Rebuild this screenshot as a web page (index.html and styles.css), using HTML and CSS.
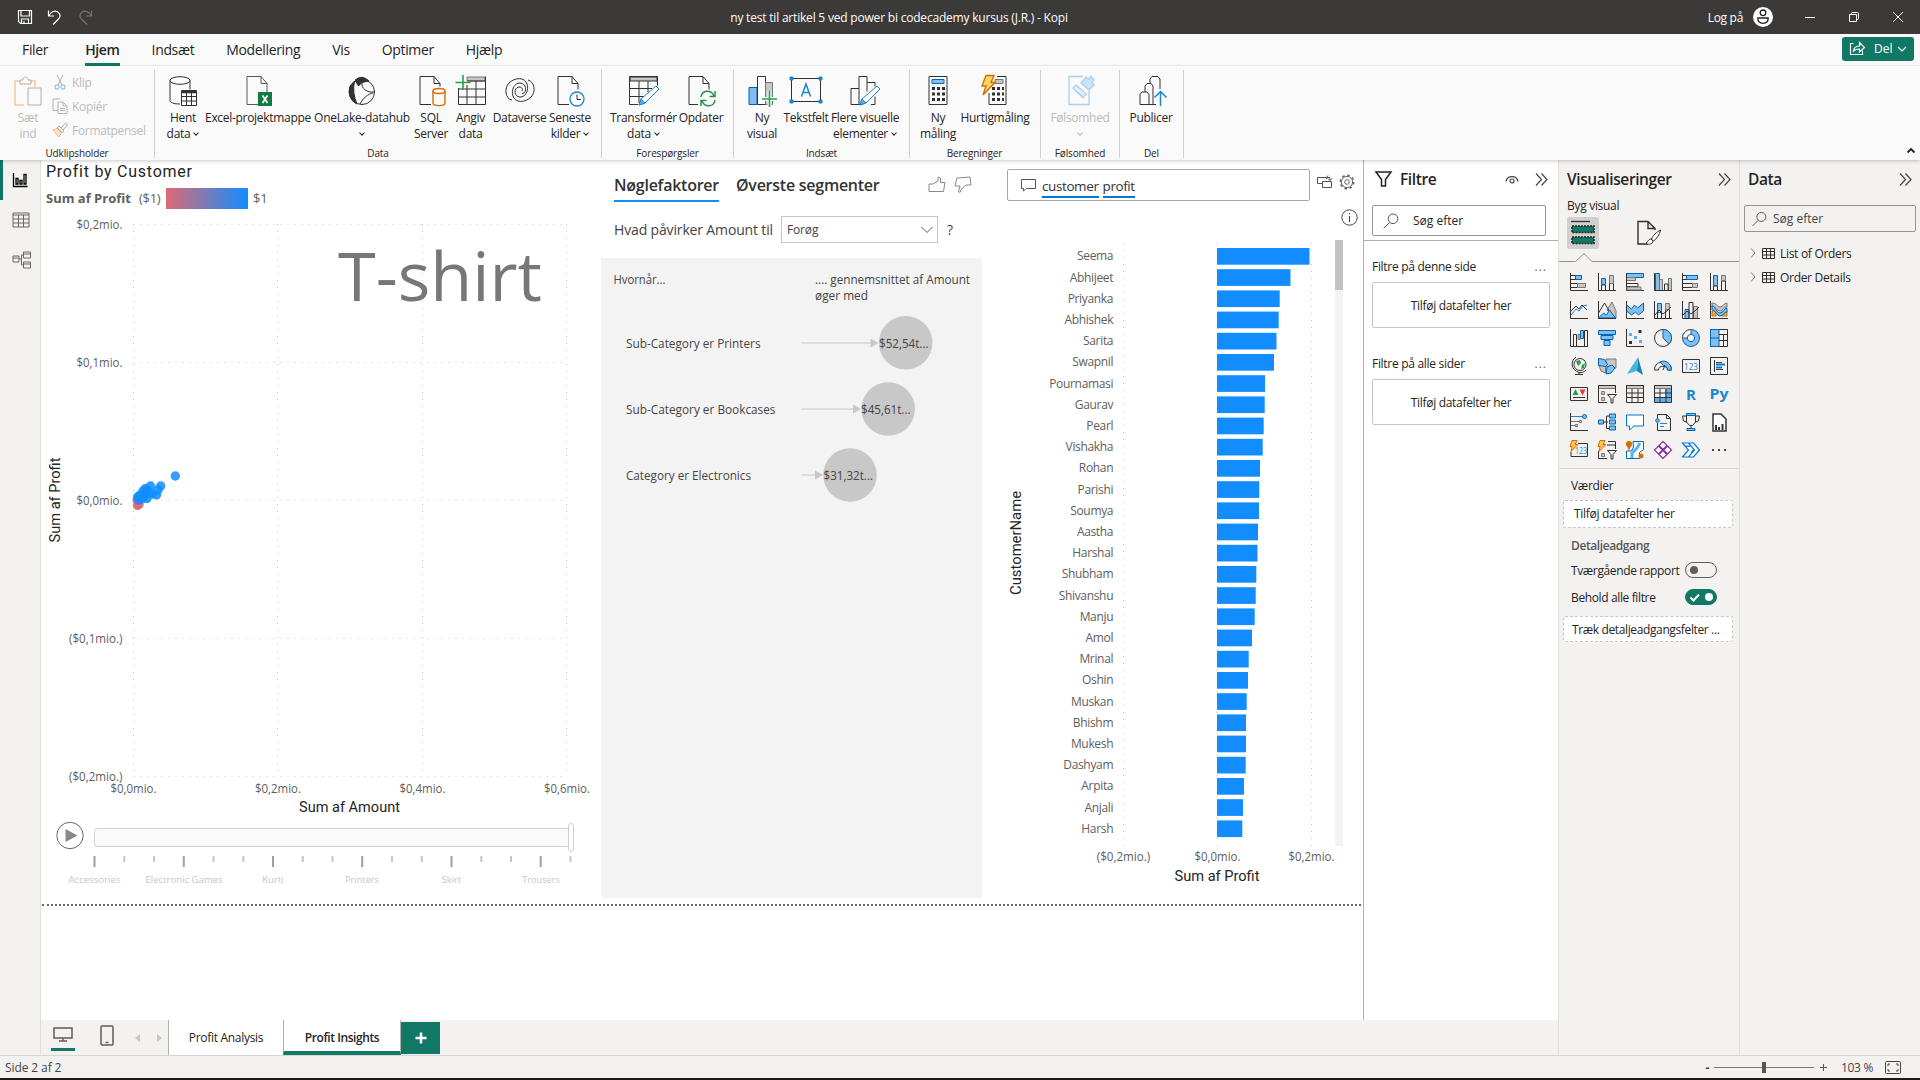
FILE: index.html
```html
<!DOCTYPE html>
<html lang="da">
<head>
<meta charset="utf-8">
<title>Power BI Desktop</title>
<link rel="stylesheet" href="styles.css">
</head>
<body>
<div class="app">
<header class="titlebar">
  <div class="quick">
    <svg width="16" height="16" viewBox="0 0 16 16" class="ln"><path d="M1.5 1.5h13v13h-11l-2-2zM4 1.5v5.500h8.500v-5.500M4.500 14.500v-4.500h7v4.500M7 12v2.500"/></svg>
    <svg width="16" height="17" viewBox="0 0 16 17" class="ln"><path d="M1.500 1.500v5.500h5.500M1.800 6.700C4 2.500 8 1 11 3.200c3.200 2.400 2.300 5.200 0 7.300L6 15.500"/></svg>
    <svg width="16" height="17" viewBox="0 0 16 17" class="ln dim"><path d="M14.500 1.500v5.500h-5.500M14.200 6.700C12 2.500 8 1 5 3.200c-3.200 2.400-2.300 5.200 0 7.300L10 15.500"/></svg>
  </div>
  <div class="doc-title">ny test til artikel 5 ved power bi codecademy kursus (J.R.) - Kopi</div>
  <div class="account">
    <span>Log på</span>
    <svg class="avatar" width="20" height="20" viewBox="0 0 20 20"><circle cx="10" cy="10" r="10" fill="#fff"/><g fill="none" stroke="#222" stroke-width="1.300"><circle cx="10" cy="5.800" r="2.800"/><path d="M4.800 11h10.400c0 3.500-2 5.300-5.200 5.300s-5.200-1.800-5.200-5.300z"/></g></svg>
    <svg class="win" width="12" height="12" viewBox="0 0 12 12"><path d="M1 6.500h10"/></svg>
    <svg class="win" width="12" height="12" viewBox="0 0 12 12"><path d="M1.500 3.500h7v7h-7zM3.500 3.500v-1q0-1 1-1h5q1 0 1 1v5q0 1-1 1h-1"/></svg>
    <svg class="win" width="12" height="12" viewBox="0 0 12 12"><path d="M1 1l10 10M11 1l-10 10"/></svg>
  </div>
</header>

<nav class="menubar">
  <a>Filer</a><a class="active">Hjem</a><a>Indsæt</a><a>Modellering</a><a>Vis</a><a>Optimer</a><a>Hjælp</a>
  <button class="share"><svg width="17" height="17" viewBox="0 0 17 17" class="ln"><path d="M4.500 3.500h-3v11h12v-4M4.500 11c.5-3.500 2.500-5 6-5v-3.500l5 5-5 4.500v-3c-2.500 0-4.500.5-6 2z"/></svg><span>Del</span><svg width="10" height="6" viewBox="0 0 10 6" class="ln"><path d="M1 1l4 4 4-4"/></svg></button>
</nav>

<section class="ribbon">
  <div class="group g-clip">
    <div class="items">
      <div class="cmd off c-paste"><svg width="30" height="32" viewBox="0 0 30 32"><path d="M11 30H2V6h5M17 6h5v6" fill="none" stroke="#f3c99b" stroke-width="1.500"/><path d="M7 9V5h3c0-4 5-4 5 0h3v4z" class="q"/><path d="M15 13h13v17H15z" class="q"/></svg><span>Sæt<br>ind</span></div>
      <div class="stack">
        <div><svg width="16" height="16" viewBox="0 0 16 16"><path d="M5 1l5 10M11 1L6 11" class="q"/><g fill="none" stroke="#9fc9ea" stroke-width="1.300"><circle cx="5" cy="13" r="2"/><circle cx="11" cy="13" r="2"/></g></svg>Klip</div>
        <div><svg width="16" height="16" viewBox="0 0 16 16" class="q"><path d="M6 12.500H1V1h7M6 4h5l4 4v7.500H6zM11 4v4h4M8 10.500h5M8 12.500h5"/></svg>Kopiér</div>
        <div><svg width="16" height="16" viewBox="0 0 16 16"><path d="M1 8l5-2 4 4-3 5z" fill="#fbe3c9" stroke="#f0bd88"/><path d="M5 6l5 5 2-2-5-5zM9 6l4.500-5 2 1.500L11 8" class="q"/></svg>Formatpensel</div>
      </div>
    </div>
    <div class="gname">Udklipsholder</div>
  </div>
  <div class="group g-data">
    <div class="items">
      <div class="cmd w36"><svg width="30" height="32" viewBox="0 0 30 32" class="k"><ellipse cx="12" cy="5.500" rx="10" ry="3.800"/><path d="M2 5.500v20c0 2 4 3.500 10 3.500M22 5.500v9"/><path d="M13.500 15.500h15v15h-15z" fill="#fff"/><path d="M14 17h14" stroke-width="2.500"/><path d="M13.500 21.500h15M13.500 26h15M18.500 18v12M23.500 18v12"/></svg><span>Hent<br>data<i class="cv"></i></span></div>
      <div class="cmd w114"><svg width="30" height="32" viewBox="0 0 30 32"><path d="M15 29.500H4v-28h14l6 7v9M18 1.500v7h6" fill="none" stroke="#5d5b59"/><path d="M15 17h14v14H15z" fill="#107c41"/><path d="M19.500 20.500l5 7.500M24.500 20.500l-5 7.500" stroke="#fff" stroke-width="1.800"/></svg><span>Excel-projektmappe</span></div>
      <div class="cmd w94"><svg width="30" height="32" viewBox="0 0 30 32" class="k"><circle cx="15" cy="17" r="12.500"/><path d="M8 5q7-6 14 1l-7 1.500-3.500 3.500zM3 11l-1 6q1 9 8 12Q5 18 7.500 6z" fill="#323130"/><path d="M15 8c-1 5 5 10 12 9M26 18c-5 1-10 5-13 11"/></svg><span>OneLake-datahub<br><i class="cv solo"></i></span></div>
      <div class="cmd w44"><svg width="30" height="32" viewBox="0 0 30 32" class="k"><path d="M15 29.500H4v-28h14l6 7v3M18 1.500v7h6"/><g stroke="#d86c00" stroke-width="1.400"><ellipse cx="23" cy="16" rx="6" ry="2.500"/><path d="M17 16v12c0 3.500 12 3.500 12 0V16"/></g></svg><span>SQL<br>Server</span></div>
      <div class="cmd w35"><svg width="32" height="32" viewBox="0 0 32 32"><path d="M12 2h18v4H12z" fill="#c8c6c4" stroke="#777"/><g class="k"><path d="M3.500 13v16.500h27v-28M12.500 6h18M3.500 14h27M3.500 22h27M12 10v19M21 6v23"/></g><path d="M8 0v15M.5 7.500h15" stroke="#21a34a" stroke-width="1.600"/></svg><span>Angiv<br>data</span></div>
      <div class="cmd w63"><svg width="30" height="32" viewBox="0 0 30 32" class="k"><path d="M7 25C0 24-1 13 4 8c6-6 16-6 18 1 2 6-1 13-7 13-6 0-7-9-1-10 3 0 4 2 3 4"/><path d="M23 5c7 2 8 12 3 17-6 6-16 6-18-1-2-6 1-13 7-13 6 0 8 9 2 11"/></svg><span>Dataverse</span></div>
      <div class="cmd w38"><svg width="30" height="32" viewBox="0 0 30 32" class="k"><path d="M14 29.500H3v-28h14l6 7v6M17 1.500v7h6"/><circle cx="22" cy="24" r="7" fill="#fff" stroke="#1b86d1" stroke-width="1.300"/><path d="M22 19.500v5h4"/></svg><span>Seneste<br>kilder<i class="cv"></i></span></div>
    </div>
    <div class="gname">Data</div>
  </div>
  <div class="group g-query">
    <div class="items">
      <div class="cmd w63"><svg width="32" height="32" viewBox="0 0 32 32" class="k"><path d="M2 2h27v4H2z" fill="#c8c6c4"/><path d="M10 29.500H1.500v-28h28v9M2 13.500h22M2 21.500h14M11 6v22M20 6v11"/><path d="M11 30l2-6 15-13 3 3-14 14z" fill="#fff" stroke="#1b86d1"/><path d="M11 30l2-6 4 4z" fill="#5fb0ee" stroke="#1b86d1"/></svg><span>Transformér<br>data<i class="cv"></i></span></div>
      <div class="cmd w52"><svg width="30" height="32" viewBox="0 0 30 32" class="k"><path d="M12 29.500H3v-28h14l6 7v6M17 1.500v7h6"/><g stroke="#2b9348" stroke-width="1.500"><path d="M15 22c1-7 10-8 13-1M29 16v5.500h-5.500M29 25c-1 7-10 8-13 1M15 31v-5.500h5.500"/></g></svg><span>Opdater</span></div>
    </div>
    <div class="gname">Forespørgsler</div>
  </div>
  <div class="group g-insert">
    <div class="items">
      <div class="cmd w36"><svg width="30" height="32" viewBox="0 0 30 32" class="k"><path d="M2 12.500h8v17H2z" fill="#83beec" stroke="#0066b4"/><path d="M10.500 1.500h8v28h-8z" fill="#fff"/><path d="M18.500 7.500h7v22h-7z" fill="#c8c6c4" stroke="#777"/><path d="M22.500 16v16M15 24h15" stroke="#fafafa" stroke-width="4"/><path d="M22.500 16v16M15 24h15" stroke="#21a34a" stroke-width="1.600"/></svg><span>Ny<br>visual</span></div>
      <div class="cmd w52"><svg width="34" height="32" viewBox="0 0 34 32" class="k"><path d="M2.500 3.500h29v23h-29z"/><path d="M12.500 21.500l4.500-12.500 4.500 12.500M14 17.500h6" stroke="#1b86d1" stroke-width="1.500"/><path d="M1 2h3v3H1zM30 2h3v3h-3zM1 25h3v3H1zM30 25h3v3h-3z" fill="#1b86d1" stroke="#1b86d1"/></svg><span>Tekstfelt</span></div>
      <div class="cmd w66"><svg width="32" height="32" viewBox="0 0 32 32" class="k"><path d="M11 29.500H2v-16h8M10 29V1.500h8v15M18 7.500h8v4M22 29.500h4v-8"/><path d="M11 30l2-6 15-13 3 3-14 14z" fill="#fff" stroke="#1b86d1"/><path d="M11 30l2-6 4 4z" fill="#5fb0ee" stroke="#1b86d1"/></svg><span>Flere visuelle<br>elementer<i class="cv"></i></span></div>
    </div>
    <div class="gname">Indsæt</div>
  </div>
  <div class="group g-calc">
    <div class="items">
      <div class="cmd w38"><svg width="20" height="32" viewBox="0 0 20 32" class="k"><path d="M1 1.500h18v28H1z"/><path d="M4 4.500h12v4H4z" fill="#83beec" stroke="#0066b4"/><path d="M4 13.500h13M4 19h13M4 24.500h13" stroke-width="3" stroke-dasharray="3 2"/></svg><span>Ny<br>måling</span></div>
      <div class="cmd w76"><svg width="28" height="32" viewBox="0 0 28 32" class="k"><path d="M8 18v11.500h17v-28h-9"/><path d="M14 4.500h8v4h-8z" fill="#c8c6c4" stroke="#777"/><path d="M11 13.500h12M11 19h12M11 24.500h12" stroke-width="3" stroke-dasharray="3 2"/><path d="M5 .5h8l-3 7h4L2 20l3-9H1z" fill="#ffd667" stroke="#d86c00" stroke-width="1.400"/></svg><span>Hurtigmåling</span></div>
    </div>
    <div class="gname">Beregninger</div>
  </div>
  <div class="group g-sens">
    <div class="items">
      <div class="cmd off w58"><svg width="30" height="32" viewBox="0 0 30 32" fill="none" stroke="#a9d0ee" stroke-width="1.300"><path d="M18 1.500H4v28h20V16"/><path d="M8 13l3-3 10 9-3 4zM10 15l7 6" fill="#e3f1fb"/><path d="M16 8l5-6 3 2 2-3 3 4-2 2 2 3-5 5z" fill="#c9e4f7"/></svg><span>Følsomhed<br><i class="cv solo"></i></span></div>
    </div>
    <div class="gname">Følsomhed</div>
  </div>
  <div class="group g-pub">
    <div class="items">
      <div class="cmd w42"><svg width="30" height="32" viewBox="0 0 30 32" class="k"><path d="M4 29.500v-10l2-2.500h5l2 2.500v10zM9 17v-6l2-2.500h4l2 2.500v11M13 29.500h7M14 8.500V4l2-2.500h6l2 2.500v10M17 22v7"/><path d="M24.500 31V17M18.500 22.500l6-6 6 6" stroke="#1b86d1" stroke-width="1.500"/></svg><span>Publicer</span></div>
    </div>
    <div class="gname">Del</div>
  </div>
  <svg class="collapse" width="10" height="7" viewBox="0 0 10 7"><path d="M1.500 5.500L5 2l3.500 3.500" fill="none" stroke="#222" stroke-width="1.800"/></svg>
</section>

<main class="work">
  <aside class="rail">
    <div class="rail-item on"><svg width="16" height="16" viewBox="0 0 16 16" class="k dark"><path d="M1.500 1v13.500h14M4 6.500h2v5.500H4zM8 8.500h2v3.500H8zM12 2.500h2v9.500h-2z"/></svg></div>
    <div class="rail-item"><svg width="18" height="16" viewBox="0 0 18 16" fill="none" stroke="#6b6967"><path d="M1 1h16v14H1zM1 3h16M1 7h16M1 11h16M6.500 3v12M11.500 3v12"/></svg></div>
    <div class="rail-item"><svg width="20" height="18" viewBox="0 0 20 18" fill="none" stroke="#6b6967"><path d="M1 5h6v6H1zM1 7h6M11.500 1h7v6h-7zM11.500 3h7M11.500 11h7v6h-7zM11.500 13h7M7 8h2.500M9.500 4v10M9.500 4h2M9.500 14h2"/></svg></div>
  </aside>

  <div class="center">
  <div class="canvas-row">
    <div class="canvas">
      <div class="visuals">
      <section class="scatter">
        <h2>Profit by Customer</h2>
        <div class="legend"><b>Sum af Profit</b><span class="lo">($1)</span><i class="ramp"></i><span>$1</span></div>
        <svg class="plot" width="560" height="680" viewBox="41 210 560 680">
          <g class="grid"><path d="M133.500 224V777M277.500 224V777M422.500 224V777M566.500 224V777M133.500 224.500H567M133.500 362.500H567M133.500 500.500H567M133.500 638.500H567M133.500 776.500H567"/></g>
          <text x="338" y="301" class="watermark" textLength="204" lengthAdjust="spacingAndGlyphs">T-shirt</text>
          <g class="ax" text-anchor="end">
            <text x="122.500" y="229" textLength="46" lengthAdjust="spacingAndGlyphs">$0,2mio.</text>
            <text x="122.500" y="367" textLength="46" lengthAdjust="spacingAndGlyphs">$0,1mio.</text>
            <text x="122.500" y="505" textLength="46" lengthAdjust="spacingAndGlyphs">$0,0mio.</text>
            <text x="122.500" y="643" textLength="53.500" lengthAdjust="spacingAndGlyphs">($0,1mio.)</text>
            <text x="122.500" y="781" textLength="53.500" lengthAdjust="spacingAndGlyphs">($0,2mio.)</text>
          </g>
          <g class="ax" text-anchor="middle">
            <text x="133.500" y="793" textLength="46" lengthAdjust="spacingAndGlyphs">$0,0mio.</text>
            <text x="278" y="793" textLength="46" lengthAdjust="spacingAndGlyphs">$0,2mio.</text>
            <text x="422.500" y="793" textLength="46" lengthAdjust="spacingAndGlyphs">$0,4mio.</text>
            <text x="567" y="793" textLength="46" lengthAdjust="spacingAndGlyphs">$0,6mio.</text>
          </g>
          <text x="349.500" y="812" class="axt" text-anchor="middle" textLength="101" lengthAdjust="spacingAndGlyphs">Sum af Amount</text>
          <text class="axt" text-anchor="middle" transform="translate(60 500) rotate(-90)" textLength="85" lengthAdjust="spacingAndGlyphs">Sum af Profit</text>
          <g fill="#e0646c" fill-opacity=".85"><circle cx="137.400" cy="505.500" r="4.700"/><circle cx="139" cy="504.500" r="4.700"/><circle cx="137" cy="500" r="4.700"/></g>
          <g fill="#118dff" fill-opacity=".85"><circle cx="175.300" cy="476" r="4.700"/><circle cx="160.700" cy="486" r="4.700"/><circle cx="158" cy="490" r="4.700"/><circle cx="156.500" cy="495" r="4.700"/><circle cx="150.500" cy="486" r="4.700"/><circle cx="145.500" cy="488.500" r="4.700"/><circle cx="147" cy="490" r="4.700"/><circle cx="143" cy="491" r="4.700"/><circle cx="149" cy="493" r="4.700"/><circle cx="147" cy="498.500" r="4.700"/><circle cx="152" cy="494" r="4.700"/><circle cx="144" cy="496" r="4.700"/><circle cx="140" cy="495" r="4.700"/><circle cx="137.500" cy="497" r="4.700"/><circle cx="138.500" cy="500" r="4.700"/><circle cx="142" cy="499" r="4.700"/></g>
          <circle cx="70" cy="835.500" r="13.200" fill="#fff" stroke="#666"/><path d="M65.500 829v13l12-6.500z" fill="#8a8886"/>
          <rect x="94.500" y="828.500" width="476" height="18" rx="3" fill="#fafafa" stroke="#d2d0ce"/>
          <rect x="568.500" y="823.500" width="5" height="28" rx="2.500" fill="#fff" stroke="#d2d0ce"/>
          <path d="M94.500 856v11M183.800 856v11M273 856v11M362.200 856v11M451.500 856v11M540.700 856v11" stroke="#a19f9d" stroke-width="2"/>
          <path d="M124.300 856v6M154 856v6M213.500 856v6M243.300 856v6M302.800 856v6M332.500 856v6M392 856v6M421.800 856v6M481.300 856v6M511 856v6M570.500 856v6" stroke="#c8c6c4" stroke-width="2"/>
          <g class="ticks" text-anchor="middle">
            <text x="94.500" y="883" textLength="52" lengthAdjust="spacingAndGlyphs">Accessories</text><text x="184" y="883" textLength="77" lengthAdjust="spacingAndGlyphs">Electronic Games</text><text x="273" y="883" textLength="21.500" lengthAdjust="spacingAndGlyphs">Kurti</text><text x="362" y="883" textLength="34" lengthAdjust="spacingAndGlyphs">Printers</text><text x="451.500" y="883" textLength="20" lengthAdjust="spacingAndGlyphs">Skirt</text><text x="541" y="883" textLength="37.500" lengthAdjust="spacingAndGlyphs">Trousers</text>
          </g>
        </svg>
      </section>

      <section class="influencers">
        <div class="ki-tabs"><span class="sel">Nøglefaktorer</span><span class="other">Øverste segmenter</span>
          <svg width="18" height="17" viewBox="0 0 18 17" class="thumb"><path d="M1 8h4l5-3V1l2.500 1v4.500H17l-1.500 9H1z"/></svg>
          <svg width="18" height="17" viewBox="0 0 18 17" class="thumb down"><path d="M3 2l13-1 1 8h-5l-5 4.500-1 3-1.500-1L6 10H1z"/></svg>
        </div>
        <div class="ki-q"><span>Hvad påvirker Amount til</span><div class="select">Forøg<svg width="12" height="8" viewBox="0 0 12 8"><path d="M.5 1L6 6.500 11.500 1" fill="none" stroke="#555"/></svg></div><span class="help">?</span></div>
        <svg class="ki-body" width="381" height="640" viewBox="601 258 381 640">
          <rect x="601" y="258" width="381" height="640" fill="#f3f3f3"/>
          <g class="kt">
          <text x="613.500" y="284" textLength="52" lengthAdjust="spacingAndGlyphs">Hvornår...</text>
          <text x="815" y="284" textLength="155" lengthAdjust="spacingAndGlyphs">.... gennemsnittet af Amount</text>
          <text x="815" y="300" textLength="53" lengthAdjust="spacingAndGlyphs">øger med</text>
          <text x="626" y="348" textLength="134.500" lengthAdjust="spacingAndGlyphs">Sub-Category er Printers</text>
          <text x="626" y="414" textLength="149.500" lengthAdjust="spacingAndGlyphs">Sub-Category er Bookcases</text>
          <text x="626" y="480" textLength="125" lengthAdjust="spacingAndGlyphs">Category er Electronics</text>
          </g>
          <path d="M801.500 343h72M801.500 409h54M801.500 475h16" stroke="#c8c8c8"/>
          <path d="M870.500 338.500l8 4.500-8 4.500zM853 404.500l8 4.500-8 4.500zM815 470.500l8 4.500-8 4.500z" fill="#c8c8c8"/>
          <g fill="#c8c8c8"><circle cx="905.700" cy="342.800" r="26.800"/><circle cx="888.200" cy="409" r="26.800"/><circle cx="850" cy="475" r="26.800"/></g>
          <g class="kt"><text x="879" y="348" textLength="49.500" lengthAdjust="spacingAndGlyphs">$52,54t...</text><text x="861" y="414" textLength="49.500" lengthAdjust="spacingAndGlyphs">$45,61t...</text><text x="823.500" y="480" textLength="49.500" lengthAdjust="spacingAndGlyphs">$31,32t...</text></g>
        </svg>
      </section>

      <section class="qna">
        <div class="qna-top">
          <div class="ask"><svg width="15" height="13" viewBox="0 0 15 13" fill="none" stroke="#555"><path d="M.5.5h14v9H5.500L2.500 12V9.500h-2z"/></svg><u>customer</u><u>profit</u></div>
          <svg class="conv" width="15" height="14" viewBox="0 0 15 14" fill="none" stroke="#555"><path d="M5 8.500H.5v-6h9M5.500 6.500h9v6h-9zM9.500 2.500v1.500M9.500 2.500h3.500v3M11 3.500l2 2 2-2M11 .5l-1.500 2"/></svg>
          <svg width="16" height="16" viewBox="0 0 16 16" fill="none" stroke="#666"><circle cx="8" cy="8" r="2.300"/><circle cx="8" cy="8" r="5.600"/><circle cx="8" cy="8" r="6.700" stroke-dasharray="2.600 2.660" stroke-width="1.600"/></svg>
        </div>
        <svg class="info" width="17" height="17" viewBox="0 0 17 17" fill="none" stroke="#444"><circle cx="8.500" cy="8.500" r="7.700"/><path d="M8.500 7v6M8.500 4v1.300"/></svg>
        <svg class="bars" width="356" height="660" viewBox="1007 230 356 660">
          <g class="grid"><path d="M1123.500 243V846M1217.500 243V846M1311.500 243V846"/></g>
          <rect x="1335" y="240" width="8" height="606" fill="#f3f3f3"/><rect x="1335" y="240" width="8" height="50" fill="#c1c1c1"/>
          <g id="bars" fill="#118dff"></g>
          <g id="names" class="ax names" text-anchor="end"></g>
          <g class="ax" text-anchor="middle"><text x="1123.500" y="861" textLength="53.500" lengthAdjust="spacingAndGlyphs">($0,2mio.)</text><text x="1217.500" y="861" textLength="46" lengthAdjust="spacingAndGlyphs">$0,0mio.</text><text x="1311.500" y="861" textLength="46" lengthAdjust="spacingAndGlyphs">$0,2mio.</text></g>
          <text x="1217" y="881" class="axt" text-anchor="middle" textLength="85" lengthAdjust="spacingAndGlyphs">Sum af Profit</text>
          <text class="axt" text-anchor="middle" transform="translate(1021 543) rotate(-90)" textLength="104" lengthAdjust="spacingAndGlyphs">CustomerName</text>
        </svg>
      </section>
      </div>
      <div class="page-edge"></div>
    </div>

    <aside class="filters">
      <div class="pane-head"><svg width="17" height="17" viewBox="0 0 17 17" fill="none" stroke="#252423" stroke-width="1.500"><path d="M1 1h15l-5.500 7.500V15h-4V8.500z"/></svg><h3>Filtre</h3>
        <svg class="eye" width="14" height="9" viewBox="0 0 14 9" fill="none" stroke="#444" stroke-width="1.200"><path d="M1 6.500C2.500 0 11.500 0 13 6.500"/><circle cx="7" cy="6" r="2"/></svg>
        <svg class="dbl" width="13" height="13" viewBox="0 0 13 13"><path d="M1 .5l5.500 6-5.500 6M6.500.5l5.500 6-5.500 6"/></svg></div>
      <div class="search"><svg width="16" height="16" viewBox="0 0 16 16"><circle cx="10" cy="5.800" r="4.800"/><path d="M6.500 9.500L.7 15.300"/></svg><span>Søg efter</span></div>
      <hr>
      <div class="flabel"><span>Filtre på denne side</span><i>...</i></div>
      <div class="fdrop">Tilføj datafelter her</div>
      <div class="flabel second"><span>Filtre på alle sider</span><i>...</i></div>
      <div class="fdrop">Tilføj datafelter her</div>
    </aside>
  </div>

  <footer class="pages">
    <div class="device on"><svg width="20" height="15" viewBox="0 0 20 15" fill="none" stroke="#605e5c" stroke-width="1.500"><path d="M1 1h18v10H1zM10 11v3M6 14h8"/></svg></div>
    <div class="device"><svg width="14" height="21" viewBox="0 0 14 21" fill="none" stroke="#605e5c" stroke-width="1.500"><rect x="1" y="1" width="12" height="19" rx="1"/><path d="M5.500 17.500h3"/></svg></div>
    <svg class="arrows" width="28" height="8" viewBox="0 0 28 8" fill="#c8c6c4"><path d="M5 0v8L0 4zM22 0v8l5-4z"/></svg>
    <div class="ptab">Profit Analysis</div>
    <div class="ptab cur">Profit Insights</div>
    <div class="padd"><svg width="12" height="12" viewBox="0 0 12 12"><path d="M6 .5v11M.5 6h11" stroke="#fff" stroke-width="2.500"/></svg></div>
  </footer>
  </div>

  <aside class="viz">
    <div class="pane-head"><h3>Visualiseringer</h3><svg class="dbl" width="13" height="13" viewBox="0 0 13 13"><path d="M1 .5l5.500 6-5.500 6M6.500.5l5.500 6-5.500 6"/></svg></div>
    <div class="build">Byg visual</div>
    <div class="modes">
      <div class="mode on"><svg width="26" height="26" viewBox="0 0 26 26"><path d="M1 1.500h19" stroke="#333" stroke-width="1.300"/><path d="M2 6h22v6.500H2zM2 17h22v6.500H2z" fill="#117865" stroke="#222" stroke-width="1.500" stroke-dasharray="2 1"/></svg></div>
      <div class="mode"><svg width="26" height="26" viewBox="0 0 26 26" class="k"><path d="M12 24H2V1.500h10l7 7V10M12 1.500v7h7" stroke-width="1.400"/><path d="M24.500 10c-4 2-8 6-9 9l2 2c3-2 6-6 7-11z" fill="#fff"/><path d="M15 19c-2 0-3 2-5 4.500 3 1.500 7 .5 7-2.500z" fill="#fff"/></svg></div>
    </div>
    <svg class="notch" width="180" height="9" viewBox="0 0 180 9" fill="none" stroke="#979593"><path d="M0 8.500h16.500L25 .7l8 7.800h147"/></svg>
    <div class="icons">
      <svg viewBox="0 0 18 18"><path class="k" d="M.5 0v17.500H18M1 2.500h5M1 6.500h5"/><path class="b" d="M5.500 2.500h6v4h-6z"/><path class="k" d="M1 10.500h6M1 14.500h6"/><path class="g" d="M7.500 10.500h8v4h-8z"/></svg>
      <svg viewBox="0 0 18 18"><path class="k" d="M.5 0v17.500H18M3.500 17v-5h4v5M11.500 17V9.500h4V17"/><path class="b" d="M3.500 5.500h4v6h-4z"/><path class="g" d="M11.500 2.500h4v8h-4z"/></svg>
      <svg viewBox="0 0 18 18"><path class="b" d="M.5.5h17v4H.5z"/><path class="g" d="M.5 4.500h9v3h-9z"/><path class="k" d="M.5 0v17.500H18M1 10.500h11v3H1"/><path class="g" d="M1 14h14v3H1z"/></svg>
      <svg viewBox="0 0 18 18"><path class="b" d="M1.500.5h4v17h-4z"/><path class="g" d="M5.500 6.500h3v11h-3zM14.500 5.500h3v12h-3z"/><path class="k" d="M.5 0v17.500H18M10.500 17v-6h3.500v6"/></svg>
      <svg viewBox="0 0 18 18"><path class="k" d="M.5 0v17.500H18M1 2.500h4M1 6.500h4M1 10.500h9M1 14.500h9"/><path class="b" d="M4.500 2.500h11v4h-11z"/><path class="g" d="M10.500 10.500h5v4h-5z"/></svg>
      <svg viewBox="0 0 18 18"><path class="k" d="M.5 0v17.500H18M3.500 17v-4h4v4M11.500 17V8h4v9"/><path class="b" d="M3.500 2.500h4v10h-4z"/><path class="g" d="M11.500 2.500h4v5h-4z"/></svg>

      <svg viewBox="0 0 18 18"><path class="k" d="M.5 0v17.500H18M1 10l5-5 3 3 3-4 5 5"/><path class="bl" d="M1 14l5-6 3 2 4-5 4-1"/></svg>
      <svg viewBox="0 0 18 18"><path class="g" d="M9 9l5-8 4 9v7z"/><path class="k" d="M.5 12L6.500 2l6 10"/><path class="b" d="M.5 17l5-5 3 2 3-5 6 8z"/><path class="k" d="M.5 0v17.500H18"/></svg>
      <svg viewBox="0 0 18 18"><path class="b" d="M.5 4l5 4 3-4 3 3 6-5v8l-5 4-3-3-4 3-5-4z"/><path class="k" d="M.5 0v17.500H18"/></svg>
      <svg viewBox="0 0 18 18"><path class="b" d="M3.500 2.500h4v9h-4z"/><path class="g" d="M11.500 2.500h4v6h-4z"/><path class="k" d="M.5 0v17.500H18M3.500 17v-6M7.500 17v-6M11.500 17V9M15.500 17V9M1 14l4-5 4 4 5-4 3-3"/></svg>
      <svg viewBox="0 0 18 18"><path class="b" d="M3 8.500h4v9H3z"/><path class="g" d="M11.500 5.500h4v12h-4z"/><path class="k" d="M.5 0v17.500H18M7 17V1.500h4V17M1 14l4-4 4 3 5-4 3-3"/></svg>
      <svg viewBox="0 0 18 18"><path class="g" d="M2 2c5 0 5 4 8 4s4-4 7-4v4c-4 0-4 4-7 4S6 6 2 6z"/><path d="M2 10h4v5H2zM12 10h5v5h-5z" fill="#f2a54a" stroke="#d86c00"/><path class="b" d="M2 5c4 0 4 7 8 7s4-5 7-5v4c-3 0-4 4-7 4S6 9 2 9z"/><path class="k" d="M.5 0v17.500H18"/></svg>

      <svg viewBox="0 0 18 18"><path class="k" d="M.5 0v17.500H18M3.500 17V5.500h3V17M14.500 17V1.500h3V17"/><path class="g" d="M8 5.500h2v5H8z"/><path class="b" d="M10.500 1.500h3v8h-3z"/></svg>
      <svg viewBox="0 0 18 18"><path class="b" d="M.5 1.500h17v4H.5zM3 6.500h12v4H3zM6 11.500h6v5H6z"/></svg>
      <svg viewBox="0 0 18 18"><path class="k" d="M.5 0v17.500H18"/><path d="M12.500 1h3v3h-3zM3 12h3v3H3z" fill="#323130"/><path d="M3 4h3v3H3zM8 7h3v3H8zM13 11h3v3h-3z" fill="#5fb0ee"/></svg>
      <svg viewBox="0 0 18 18"><circle class="k" cx="9" cy="9" r="8.500"/><path class="b" d="M9 9V.5a8.500 8.500 0 0 1 6 14.500z"/></svg>
      <svg viewBox="0 0 18 18"><circle class="b" cx="9" cy="9" r="8.500"/><path d="M9 .5A8.500 8.500 0 0 0 .5 9H5l4-4z" fill="#fff" stroke="#555"/><circle cx="9" cy="9" r="3.700" fill="#f3f2f1" stroke="#0066b4"/></svg>
      <svg viewBox="0 0 18 18"><path class="k" d="M.5.5h17v17H.5z"/><path class="b" d="M.5.5H9v17H.5zM.5 9H9"/><path class="k" d="M9 5.500h8.500M9 11.500h4.500M13.500 5.500v12M13.500 11.500h4"/></svg>

      <svg viewBox="0 0 18 18"><circle class="k" cx="10" cy="7.500" r="6"/><path d="M6 4l4-1 1 3-3 3zM12 8l3-2-1 5-3 1z" fill="#21a34a"/><path class="k" d="M6 0C0 4 1 13 9 15.500c3 .5 5-.5 7-2.500M9 15.500v2M5 17.500h8"/></svg>
      <svg viewBox="0 0 18 18"><path class="g" d="M8 2h10v9l-5 2-5-4zM.5 7l7 2v7L3 14z"/><path class="b" d="M.5 1.500l6 1 3 5-2 2-7-1zM9 10l5-2 3 3-4 5-5 1z"/></svg>
      <svg viewBox="0 0 18 18"><path d="M12 0l5 18-6-4z" fill="#1c7fb5"/><path d="M12 0L1 17l10-3z" fill="#48b4e0"/></svg>
      <svg viewBox="0 0 18 18"><path class="k" d="M.5 13C.5 2 17.500 2 17.500 13h-4C13.500 8 4.500 8 4.500 13z"/><path class="b" d="M6 5c6-3 11.500 2 11.500 8h-4c0-3-2-4.500-4-4.500z"/><path class="k" d="M9 13l2-5"/></svg>
      <svg viewBox="0 0 18 18"><path class="k" d="M.5 2.500h17v13H.5z"/><text x="2" y="13" class="n123" textLength="14" lengthAdjust="spacingAndGlyphs">123</text></svg>
      <svg viewBox="0 0 18 18"><path class="k" d="M.5.500h17v17H.5zM4.500 3v12"/><path d="M6 5.500h6M6 12.500h7" stroke="#444" stroke-width="1"/><path d="M6 7.500h9M6 10.500h6" stroke="#0078d4" stroke-width="2"/></svg>

      <svg viewBox="0 0 18 18"><path class="k" d="M.5 2.500h17v13H.5zM3 12.500h12"/><path d="M2.500 10L5.500 4l3 6z" fill="#21a34a"/><path d="M9.500 4.500h6l-3 6z" fill="#e03a3a"/></svg>
      <svg viewBox="0 0 18 18"><path class="g" d="M.5.500h17v3H.5z"/><path class="k" d="M9 17.500H.5V.5h17V8"/><path class="g" d="M3.500 6.500h3v3h-3zM3.500 12.500h3v3h-3z"/><path class="k" d="M9.500 9.500h9l-3.500 4v4.500h-2v-4.500z" fill="#fff"/></svg>
      <svg viewBox="0 0 18 18"><path class="g" d="M.5.500h17v3H.5z"/><path class="k" d="M.5.500h17v17H.5zM.5 8h17M.5 12.500h17M6 4v13M12 4v13"/></svg>
      <svg viewBox="0 0 18 18"><path class="g" d="M.5.500h17v3H.5z"/><path d="M11 4h6v13H1v-4h10z" fill="#5fb0ee"/><path class="k" d="M.5.500h17v17H.5zM.5 8h17M.5 12.500h17M6 4v13M12 4v13"/></svg>
      <svg viewBox="0 0 18 18"><text x="4" y="15" class="lang">R</text></svg>
      <svg viewBox="0 0 18 18"><text x="-.5" y="14" class="lang" textLength="19" lengthAdjust="spacingAndGlyphs">Py</text></svg>

      <svg viewBox="0 0 18 18"><path class="k" d="M.5 0v17.500H18"/><path class="bl" d="M1 3.500h11"/><circle cx="14.500" cy="3.500" r="2" class="b"/><path d="M1 8.500h8M1 12.500h5" stroke="#777"/><path class="g" d="M9.500 7.500h2v2h-2zM5.500 11.500h2v2h-2z"/></svg>
      <svg viewBox="0 0 18 18"><path class="k" d="M6 9h4M8.500 3v12.500M8.500 3h3M8.500 15.500h3"/><path class="b" d="M.5 7h5v4h-5zM11.500 1h6v4h-6zM11.500 7h6v4h-6zM11.500 13h6v4h-6z"/></svg>
      <svg viewBox="0 0 18 18"><path d="M.5 2h17v11H8l-4.500 4v-4h-3z" fill="#fff" stroke="#0078d4"/></svg>
      <svg viewBox="0 0 18 18"><path class="k" d="M3.500 5V1.500h9l4 4v12h-13V10M12.500 1.500v4h4"/><circle class="b" cx="3.500" cy="7.500" r="1.800"/><path class="bl" d="M6 10.500h7M6 13.500h4"/></svg>
      <svg viewBox="0 0 18 18"><path class="k" d="M4.500 1v8l3 3.500h3l3-3.500V1zM4 3H.5l1 5 3 1M14 3h3.500l-1 5-3 1M9 12.500v3"/><path class="b" d="M4.500.5h9v2h-9zM5 15.500h8v2H5z"/></svg>
      <svg viewBox="0 0 18 18"><path d="M3 1h8l5 5v12H3z" fill="#fff" stroke="#333" stroke-width="1.500"/><path d="M6 17v-5M9 17v-3M12.500 17v-6" stroke="#333" stroke-width="2"/></svg>

      <svg viewBox="0 0 18 18"><path class="k" d="M4 15.500h13.500v-13H8M1 11v4.500h3"/><text x="5" y="13" class="n123" textLength="12" lengthAdjust="spacingAndGlyphs">123</text><path class="o" d="M2-.5h5l-2 4h3l-7 7 1-5h-2z"/></svg>
      <svg viewBox="0 0 18 18"><path class="k" d="M9 17.500H.5V10M10 .5h7.500V8M9 4h8"/><path class="g" d="M3.500 12.500h3v3h-3z"/><path class="k" d="M9.500 9.500h9l-3.500 4v4.500h-2v-4.500z" fill="#fff"/><path class="o" d="M2-.5h5l-2 4h3l-7 7 1-5h-2z"/></svg>
      <svg viewBox="0 0 18 18"><path d="M7 .5h10.500v8l-4 3v6H.5V10h5l2-4z" fill="#fff" stroke="#0066b4"/><path d="M14 2l-3 5-5 5v5" fill="none" stroke="#5fb0ee" stroke-width="3"/><circle cx="3" cy="3" r="3" fill="#d86c00"/><path d="M.5 4L3 9.500 5.500 4z" fill="#d86c00"/><circle cx="15" cy="15" r="2.500" fill="#d86c00"/></svg>
      <svg viewBox="0 0 18 18" fill="#fff" stroke="#8a2da5" stroke-width="1.200"><path d="M9 .5l4 4-4 4-4-4zM4.500 5l4 4-4 4-4-4zM13.500 5l4 4-4 4-4-4zM9 9.500l4 4-4 4-4-4z"/></svg>
      <svg viewBox="0 0 18 18" fill="#fff" stroke="#0078d4" stroke-width="1.200"><path d="M.5 2h6l6 7-6 7h-6l6-7zM6.500 2h5l6 7-6 7h-5M3 5l5.500.2M9 12l3-4"/></svg>
      <svg viewBox="0 0 18 18"><path d="M2 8h2v2H2zM8 8h2v2H8zM14 8h2v2h-2z" fill="#444"/></svg>
    </div>
    <div class="wells">
      <div class="wl">Værdier</div>
      <div class="well">Tilføj datafelter her</div>
      <div class="wl head">Detaljeadgang</div>
      <div class="trow"><span>Tværgående rapport</span><i class="tog"></i></div>
      <div class="trow last"><span>Behold alle filtre</span><i class="tog on"><svg width="12" height="9" viewBox="0 0 12 9"><path d="M1.500 4.500l3 3 5.500-6" fill="none" stroke="#fff" stroke-width="2"/></svg></i></div>
      <div class="well low">Træk detaljeadgangsfelter ...</div>
    </div>
  </aside>

  <aside class="data">
    <div class="pane-head"><h3>Data</h3><svg class="dbl" width="13" height="13" viewBox="0 0 13 13"><path d="M1 .5l5.500 6-5.500 6M6.500.5l5.500 6-5.500 6"/></svg></div>
    <div class="search"><svg width="15" height="16" viewBox="0 0 16 16"><circle cx="10" cy="5.800" r="4.800"/><path d="M6.500 9.500L.7 15.300"/></svg><span>Søg efter</span></div>
    <div class="tbl"><svg width="6" height="10" viewBox="0 0 6 10"><path d="M1 .5L5 5 1 9.500" fill="none" stroke="#777"/></svg><svg width="13" height="13" viewBox="0 0 13 13" class="k"><path d="M.5 1.500h12v10H.5zM.5 4.500h12M.5 8h12M4.500 1.500v10M8.500 1.500v10"/></svg><span>List of Orders</span></div>
    <div class="tbl"><svg width="6" height="10" viewBox="0 0 6 10"><path d="M1 .5L5 5 1 9.500" fill="none" stroke="#777"/></svg><svg width="13" height="13" viewBox="0 0 13 13" class="k"><path d="M.5 1.500h12v10H.5zM.5 4.500h12M.5 8h12M4.500 1.500v10M8.500 1.500v10"/></svg><span>Order Details</span></div>
  </aside>
</main>

<footer class="status"><span>Side 2 af 2</span>
  <div class="zoom"><b>-</b><div class="slider"><i></i></div><svg class="plus" width="7" height="7" viewBox="0 0 7 7" stroke="#555"><path d="M3.500 0v7M0 3.500h7"/></svg><span>103 %</span><svg width="16" height="13" viewBox="0 0 16 13" fill="none" stroke="#444"><rect x=".5" y=".5" width="15" height="12" rx="1"/><path d="M3 5V3h2M11 3h2v2M13 8v2h-2M5 10H3V8"/></svg></div>
</footer>
</div>
<script src="chart.js"></script>
</body>
</html>
```
FILE: chart.js
```js
// Customer profit bars: [name, bar length]
const customers = [
  ["Seema", 92.5], ["Abhijeet", 73.5], ["Priyanka", 62.7], ["Abhishek", 61.7], ["Sarita", 59.5],
  ["Swapnil", 57], ["Pournamasi", 48], ["Gaurav", 47.7], ["Pearl", 46.7], ["Vishakha", 45.7],
  ["Rohan", 43], ["Parishi", 42.3], ["Soumya", 42], ["Aastha", 41], ["Harshal", 40.5],
  ["Shubham", 39.3], ["Shivanshu", 38.7], ["Manju", 37.7], ["Amol", 35], ["Mrinal", 31.7],
  ["Oshin", 31], ["Muskan", 29.7], ["Bhishm", 29], ["Mukesh", 29], ["Dashyam", 28.7],
  ["Arpita", 27], ["Anjali", 26], ["Harsh", 25.3]
];
const NS = "http://www.w3.org/2000/svg";
customers.forEach(([name, length], i) => {
  const top = 248 + i * 21.2;
  const bar = document.createElementNS(NS, "rect");
  bar.setAttribute("x", 1217);
  bar.setAttribute("y", top);
  bar.setAttribute("width", length);
  bar.setAttribute("height", 16.7);
  document.getElementById("bars").append(bar);
  const label = document.createElementNS(NS, "text");
  label.setAttribute("x", 1113.2);
  label.setAttribute("y", top + 12.3);
  label.textContent = name;
  document.getElementById("names").append(label);
});
```
FILE: styles.css
```css
* { box-sizing: border-box; }
html, body { margin: 0; height: 100%; }
body {
  font-family: "Open Sans", "Noto Sans", sans-serif;
  font-size: 12px;
  letter-spacing: -.3px;
  color: #252423;
  background: #1b1a19;
  overflow: hidden;
}
svg { display: block; flex: none; overflow: visible; letter-spacing: 0; }
h2, h3 { margin: 0; }
i { font-style: normal; }
.app { width: 1920px; height: 1078px; display: flex; flex-direction: column; background: #f3f2f1; white-space: nowrap; }

.k { fill: none; stroke: #323130; }
.k.dark { stroke: #000; stroke-width: 1.3; }
.q { fill: none; stroke: #b3b0ad; }
.b { fill: #83beec; stroke: #0066b4; }
.g { fill: #c8c6c4; stroke: #797775; }
.o { fill: #ffc35a; stroke: #d86c00; }
.bl { fill: none; stroke: #1b86d1; }
.ln { fill: none; stroke: #fff; stroke-width: 1.2; }
.ln.dim { stroke: #777573; }

.titlebar { height: 34px; flex: none; background: #3b3a39; color: #fff; display: grid; grid-template-columns: 600px 1fr 600px; align-items: center; }
.quick { display: flex; gap: 14px; padding-left: 17px; }
.doc-title { text-align: center; padding-right: 122px; letter-spacing: -.2px; }
.account { display: flex; align-items: center; justify-content: flex-end; padding-right: 16px; }
.avatar { margin: 0 31px 0 10px; }
.win { fill: none; stroke: #fff; margin-left: 32px; }
.avatar + .win { margin-left: 0; }

.menubar { height: 32px; flex: none; background: #fafafa; display: flex; align-items: center; padding: 0 6px 0 22px; font-size: 14px; letter-spacing: -.35px; }
.menubar a { height: 32px; line-height: 31px; margin-right: 32px; }
.menubar a:first-child { margin-right: 37px; }
.menubar .active { font-weight: 600; border-bottom: 3px solid #117865; }
.share { margin: -3px 0 0 auto; width: 72px; height: 24px; border: 0; border-radius: 3px; background: #117865; color: #fff; font: inherit; font-size: 12px; display: flex; align-items: center; padding: 0 7px; gap: 8px; }
.share span { margin-right: -3px; }

.ribbon { height: 94px; flex: none; background: #fafafa; display: flex; padding-top: 4px; box-shadow: 0 1px 4px rgba(0,0,0,.22); position: relative; z-index: 2; }
.group { height: 88px; border-right: 1px solid #d2d0ce; display: flex; flex-direction: column; justify-content: space-between; }
.g-clip { width: 155px; }
.g-data { width: 447px; padding-left: 10px; }
.g-query { width: 132px; padding-left: 10px; }
.g-insert { width: 176px; padding-left: 10px; }
.g-calc { width: 131px; padding-left: 9px; }
.g-sens { width: 79px; padding-left: 10px; }
.g-pub { width: 64px; padding-left: 10px; }
.items { display: flex; padding-top: 5px; }
.cmd { display: flex; flex-direction: column; align-items: center; text-align: center; line-height: 16px; gap: 3px; }
.off, .stack { color: #bebbb8; }
.c-paste { width: 36px; margin-left: 10px; }
.w35 { width: 35px; } .w36 { width: 36px; } .w38 { width: 38px; } .w42 { width: 42px; } .w44 { width: 44px; }
.w52 { width: 52px; } .w58 { width: 58px; } .w63 { width: 63px; } .w66 { width: 66px; } .w76 { width: 76px; }
.w94 { width: 94px; } .w114 { width: 114px; }
.cv { display: inline-block; width: 4px; height: 4px; border: solid currentColor; border-width: 0 1.5px 1.5px 0; transform: rotate(45deg); margin: 0 1px 3px 4px; }
.cv.solo { margin: 0 0 3px; }
.stack { display: flex; flex-direction: column; gap: 8px; margin: -1px 0 0 6px; }
.stack div { display: flex; align-items: center; gap: 4px; height: 16px; }
.gname { text-align: center; font-size: 10px; line-height: 12px; margin: 0 0 -1px -10px; letter-spacing: -.15px; }
.g-clip .gname { margin-left: 0; }
.collapse { position: absolute; right: 4px; bottom: 6px; }

.work { flex: 1; min-height: 0; display: flex; }
.rail { width: 41px; border-right: 1px solid #e1dfdd; }
.rail-item { height: 40px; display: flex; align-items: center; padding-left: 12px; }
.rail-item.on { border-left: 3px solid #117865; padding-left: 9px; }
.center { width: 1517px; display: flex; flex-direction: column; }
.canvas-row { height: 860px; display: flex; background: #fff; }
.canvas { width: 1323px; border-right: 1px solid #b3b0ad; }
.visuals { display: flex; height: 744px; }
.page-edge { border-top: 2px dotted #666; margin: 0 2px 0 1px; }

.scatter { width: 560px; }
.scatter h2 { font: 400 16px/20px Roboto, sans-serif; letter-spacing: .75px; padding: 2px 0 0 5px; }
.legend { display: flex; align-items: center; height: 22px; padding-left: 5px; margin-top: 5px; font-size: 13px; color: #605e5c; }
.legend b { width: 93px; letter-spacing: 0; }
.legend .lo { width: 27px; }
.ramp { width: 82px; height: 21px; margin: 0 5px 0 0; background: linear-gradient(90deg, #de6a73, #118dff); }
.plot { margin-top: 1px; }
.grid path { fill: none; stroke: #c8c6c4; stroke-dasharray: 1 6; }
.ax text { font-size: 12px; fill: #605e5c; }
.names text { letter-spacing: -.33px; }
.axt { font: 15px Roboto, sans-serif; fill: #252423; }
.ticks text { font-size: 9.500px; fill: #c8c6c4; }
.watermark { font-size: 68px; fill: #777; }

.influencers { width: 381px; }
.ki-tabs { display: flex; height: 42px; padding: 12px 0 0 13px; font-size: 16px; font-weight: 600; letter-spacing: -.25px; color: #333; }
.ki-tabs .sel { border-bottom: 2px solid #118dff; line-height: 27px; height: 30px; width: 105px; }
.ki-tabs .other { margin-left: 17px; line-height: 27px; width: 141px; }
.thumb { fill: none; stroke: #888; margin: 4px 0 0 51px; }
.thumb.down { margin-left: 8px; }
.ki-q { display: flex; align-items: center; padding-left: 13px; margin-top: 14px; height: 27px; font-size: 14px; letter-spacing: -.15px; color: #444; }
.ki-q > span:first-child { width: 158px; }
.select { width: 157px; height: 27px; margin-left: 9px; border: 1px solid #c8c6c4; font-size: 12px; display: flex; align-items: center; justify-content: space-between; padding: 0 4px 0 5px; }
.help { margin-left: 9px; }
.ki-body { margin-top: 15px; }
.kt text { font-size: 12px; fill: #444; }

.qna { width: 356px; margin-left: 25px; }
.qna-top { display: flex; align-items: center; padding-top: 9px; height: 41px; }
.ask { width: 303px; height: 32px; border: 1px solid #a6a6a6; border-radius: 2px; display: flex; align-items: center; padding-left: 13px; font-size: 13.5px; letter-spacing: -.4px; color: #333; }
.ask svg { margin-right: 6px; }
.ask u { text-decoration: none; border-bottom: 2px solid #0078d4; line-height: 20px; margin: 4px 4px 0 0; }
.conv { margin: -6px 7px 0 7px; }
.conv + svg { margin-top: -6px; }
.info { margin: 8px 0 0 334px; }
.bars { margin-top: 4px; }

.filters { width: 194px; }
.pane-head { display: flex; align-items: center; height: 38px; }
.pane-head h3 { font-size: 15.500px; font-weight: 600; letter-spacing: -.4px; }
.dbl { fill: none; stroke: #444; stroke-width: 1.2; }
.filters .pane-head { padding-left: 11px; }
.filters h3 { margin-left: 8px; width: 105px; }
.eye { margin-right: 16px; }
.search { display: flex; align-items: center; border: 1px solid #979593; border-radius: 2px; }
.search svg { fill: none; stroke: #555; }
.filters .search { width: 174px; height: 31px; margin: 7px 0 0 8px; padding-left: 10px; background: #fff; }
.filters .search span { margin-left: 14px; letter-spacing: 0; }
hr { border: 0; border-top: 1px solid #b3b0ad; margin: 4px 0 0; }
.flabel { display: flex; justify-content: space-between; align-items: center; height: 20px; margin: 15px 11px 6px 8px; }
.flabel i { letter-spacing: 1px; color: #666; }
.fdrop { width: 178px; height: 46px; margin-left: 8px; border: 1px solid #c8c6c4; border-radius: 2px; display: flex; align-items: center; justify-content: center; }
.flabel.second { margin-top: 25px; }

.pages { height: 35px; display: flex; background: #f3f2f1; }
.device { width: 24px; height: 31px; display: flex; align-items: center; justify-content: center; margin-left: 10px; }
.device.on { border-bottom: 3px solid #117865; }
.device + .device { margin-left: 20px; }
.arrows { width: 28px; margin: 14px 5px 0 16px; }
.ptab { width: 115px; border-left: 1px solid #b3b0ad; background: #fff; display: flex; align-items: center; justify-content: center; }
.ptab.cur { width: 118px; font-weight: 600; letter-spacing: -.42px; border-bottom: 4px solid #117865; padding-top: 3px; border-right: 1px solid #b3b0ad; }
.padd { width: 39px; height: 32px; margin-top: 2px; background: #117865; display: grid; place-items: center; }

.viz { width: 182px; border-left: 1px solid #e1dfdd; border-right: 1px solid #e1dfdd; }
.viz .pane-head { padding: 0 8px; justify-content: space-between; }
.build { padding-left: 8px; line-height: 16px; }
.modes { display: flex; margin: 3px 0 0 8px; height: 32px; gap: 34px; }
.mode { width: 32px; height: 32px; display: grid; place-items: center; border-radius: 2px; }
.mode.on { background: #d2d0ce; }
.notch { margin-top: 4px; width: 180px; }
.icons { display: grid; grid-template-columns: repeat(6, 18px); gap: 10px; padding: 11px 0 9px 11px; border-bottom: 1px solid #d8d6d4; }
.icons svg { width: 18px; height: 18px; }
.n123 { font-size: 9.500px; fill: #1b86d1; }
.lang { font-size: 15px; font-weight: 700; fill: #1b86d1; }
.wells { padding: 8px 4px; }
.wl { padding-left: 8px; line-height: 18px; }
.well { width: 170px; height: 28px; margin-top: 5px; background: #fff; border: 1px dashed #c8c6c4; border-radius: 2px; line-height: 26px; padding-left: 10px; }
.wl.head { font-weight: 600; color: #555; margin-top: 9px; letter-spacing: -.4px; }
.trow { display: flex; justify-content: space-between; align-items: center; height: 16px; margin-top: 7px; padding: 0 18px 0 8px; letter-spacing: -.37px; }
.trow.last { margin-top: 11px; }
.tog { width: 32px; height: 16px; border: 1px solid #605e5c; border-radius: 8px; display: flex; align-items: center; padding: 0 3px; }
.tog::after { content: ""; width: 8px; height: 8px; border-radius: 50%; background: #605e5c; margin-left: 1px; }
.tog.on { background: #117865; border-color: #117865; justify-content: space-between; }
.tog.on::after { background: #fff; }
.well.low { margin-top: 11px; height: 26px; line-height: 25px; padding-left: 8px; letter-spacing: -.37px; }

.data { width: 180px; }
.data .pane-head { padding: 0 8px; justify-content: space-between; }
.data .search { width: 172px; height: 27px; margin: 7px 0 9px 4px; padding-left: 7px; }
.data .search span { margin-left: 6px; color: #444; letter-spacing: 0; }
.tbl { display: flex; align-items: center; height: 24px; padding-left: 10px; }
.tbl .k { margin: 0 5px 0 6px; }

.status { height: 23px; flex: none; border-top: 1px solid #d8d6d4; display: flex; align-items: center; justify-content: space-between; padding: 0 19px 0 5px; color: #444; }
.status > span { letter-spacing: -.1px; }
.zoom { display: flex; align-items: center; }
.slider { width: 100px; height: 1px; background: #777; margin: 0 6px 0 5px; display: flex; align-items: center; justify-content: center; }
.slider i { width: 4px; height: 11px; background: #555; flex: none; }
.plus { margin-right: 14px; }
.zoom span { width: 33px; margin-right: 11px; }
```
